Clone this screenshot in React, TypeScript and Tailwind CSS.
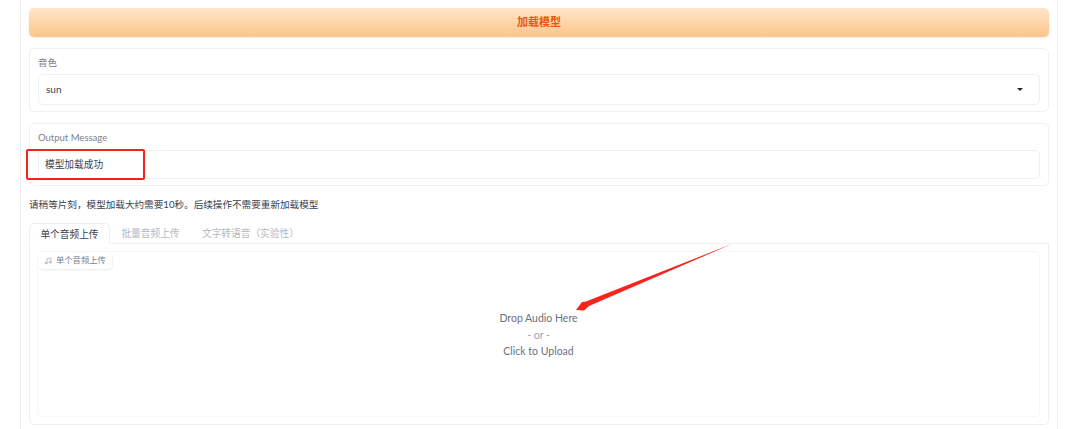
import React from 'react'

const App = () => {
  return (
    <div className="relative h-[429px] w-[1080px] overflow-hidden bg-white font-['Lato','Noto_Sans_CJK_SC',sans-serif]">
      <div className="ml-[20px] h-[429px] w-[1038px] border-x border-[#eeeff1] px-[8px] pt-[8px]">
        <button className="flex h-[29px] w-full items-center justify-center rounded-[5px] bg-gradient-to-b from-[#ffe6c8] to-[#fdc48a] text-[11px] font-bold text-[#ea580c] shadow-[0_1px_2px_rgba(0,0,0,0.08)]">
          加载模型
        </button>

        <div className="mt-[11px] h-[64px] rounded-[5px] border border-[#f0f1f3] px-[8px] pt-[6px]">
          <div className="h-[19px] text-[9.5px] leading-[15px] text-[#7b8290]">音色</div>
          <div className="flex h-[31px] items-center justify-between rounded-[5px] border border-[#eff0f2] pl-[7px] pr-[16px] text-[10px] text-[#374151]">
            <span>sun</span>
            <span className="h-0 w-0 border-x-[3px] border-t-[3px] border-x-transparent border-t-[#1f2937]" />
          </div>
        </div>

        <div className="mt-[11px] h-[63px] rounded-[5px] border border-[#f0f1f3] px-[8px] pt-[6px]">
          <div className="h-[20px] text-[9.5px] leading-[15px] text-[#7b8290]">Output Message</div>
          <div className="flex h-[29px] items-center rounded-[5px] border border-[#eff0f2] pl-[6px] text-[9.7px] text-[#374151]">
            模型加载成功
          </div>
        </div>

        <p className="mt-[11px] h-[15px] text-[9.6px] leading-[15px] text-[#374151]">
          请稍等片刻，模型加载大约需要10秒。后续操作不需要重新加载模型
        </p>

        <div className="mt-[11px] flex h-[20px] items-stretch text-[9.7px]">
          <div className="z-10 -mb-px flex w-[81px] items-center justify-center rounded-t-[5px] border border-[#eeeff1] border-b-white bg-white pt-[1px] text-[#374151]">
            单个音频上传
          </div>
          <div className="flex w-[81px] items-center justify-center pt-[1px] text-[#b4b8c0]">批量音频上传</div>
          <div className="flex items-center pl-[11px] pt-[1px] text-[#b4b8c0]">文字转语音（实验性）</div>
        </div>

        <div className="h-[182px] rounded-b-[5px] border border-[#eeeff1] p-[7px] pr-[8px]">
          <div className="flex h-[166px] flex-col rounded-[5px] border border-dotted border-[#eceef0]">
            <div className="flex h-[18px] w-[75px] items-center gap-[4px] rounded-[5px] border-b border-r border-[#f0f1f3] pl-[6px] text-[8.3px] text-[#7b8290] shadow-[0_1px_1px_rgba(0,0,0,0.03)]">
              <svg width="8" height="8" viewBox="0 0 24 24" fill="none" stroke="#a3a8b1" strokeWidth="2" strokeLinecap="round" strokeLinejoin="round">
                <path d="M9 18V5l12-2v13" />
                <circle cx="6" cy="18" r="3" />
                <circle cx="18" cy="16" r="3" />
              </svg>
              <span>单个音频上传</span>
            </div>
            <div className="flex flex-col items-center pt-[40px] text-[#6b7280]">
              <div className="h-[17px] text-[10.5px] leading-[17px]">Drop Audio Here</div>
              <div className="h-[16px] text-[10.5px] leading-[16px] text-[#9ca3af]">- or -</div>
              <div className="h-[17px] text-[10.5px] leading-[17px]">Click to Upload</div>
            </div>
          </div>
        </div>
      </div>

      <div className="absolute left-[26px] top-[149px] h-[31px] w-[119px] rounded-[2px] border-2 border-[#f5221b]" />

      <svg className="absolute left-0 top-0" width="1080" height="429" fill="none">
        <path d="M733 243.5 L586 301.5 L582 302 L576 310 L584 310.5 L589 306 Z" fill="#f8231c" />
      </svg>
    </div>
  )
}

export default App
